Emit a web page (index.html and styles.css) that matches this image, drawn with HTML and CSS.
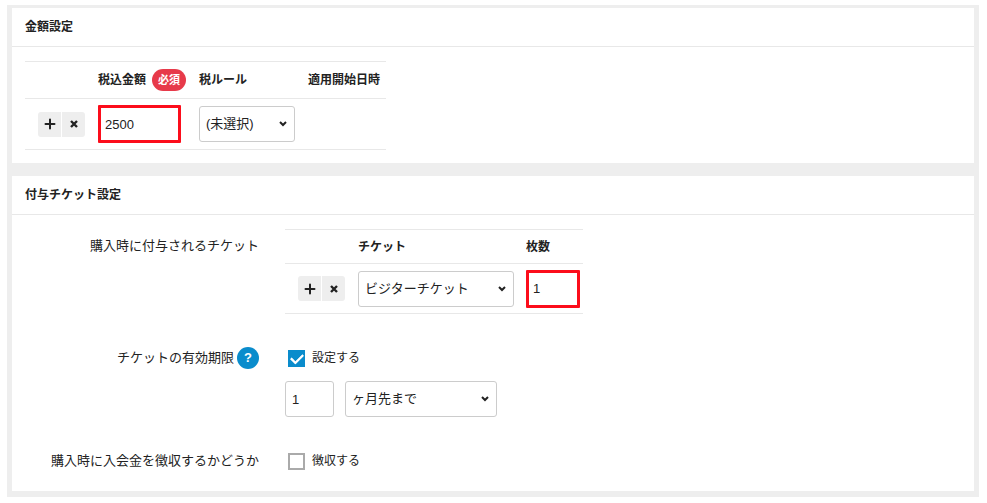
FILE: index.html
```html
<!DOCTYPE html>
<html lang="ja">
<head>
<meta charset="utf-8">
<meta name="viewport" content="width=device-width, initial-scale=1">
<title>金額設定</title>
<link rel="stylesheet" href="styles.css">
</head>
<body>
<svg class="sprite" aria-hidden="true">
  <symbol id="plus" viewBox="0 0 12 12"><path d="M6 1.5v9M1.5 6h9" stroke="currentColor" stroke-width="2" stroke-linecap="round" fill="none"/></symbol>
  <symbol id="cross" viewBox="0 0 12 12"><path d="M3 3l6 6M9 3l-6 6" stroke="currentColor" stroke-width="2.4" fill="none"/></symbol>
</svg>
<form class="page">
  <section class="panel">
    <h2 class="panel-title">金額設定</h2>
    <div class="panel-body">
      <table class="grid price-grid">
        <colgroup><col class="c-actions"><col class="c-price"><col class="c-rule"><col class="c-date"></colgroup>
        <thead>
          <tr><th></th><th scope="col"><span class="required-head"><label for="price">税込金額</label><span class="badge">必須</span></span></th><th scope="col"><label for="rule">税ルール</label></th><th scope="col">適用開始日時</th></tr>
        </thead>
        <tbody>
          <tr>
            <td><div class="actions"><button type="button" aria-label="追加"><svg><use href="#plus"/></svg></button><button type="button" aria-label="削除"><svg><use href="#cross"/></svg></button></div></td>
            <td><input class="field price marked" id="price" type="text" value="2500"></td>
            <td><span class="select rule"><select class="field" id="rule"><option>(未選択)</option></select><svg class="chevron" viewBox="0 0 8 6"><path d="M1 1l3 3 3-3"/></svg></span></td>
            <td></td>
          </tr>
        </tbody>
      </table>
    </div>
  </section>

  <section class="panel">
    <h2 class="panel-title">付与チケット設定</h2>
    <div class="panel-body rows">
      <div class="row">
        <div class="row-label tall">購入時に付与されるチケット</div>
        <table class="grid ticket-grid">
          <colgroup><col class="c-actions"><col class="c-ticket"><col class="c-count"></colgroup>
          <thead>
            <tr><th></th><th scope="col"><label for="ticket">チケット</label></th><th scope="col"><label for="count">枚数</label></th></tr>
          </thead>
          <tbody>
            <tr>
              <td><div class="actions"><button type="button" aria-label="追加"><svg><use href="#plus"/></svg></button><button type="button" aria-label="削除"><svg><use href="#cross"/></svg></button></div></td>
              <td><span class="select"><select class="field" id="ticket"><option>ビジターチケット</option></select><svg class="chevron" viewBox="0 0 8 6"><path d="M1 1l3 3 3-3"/></svg></span></td>
              <td><input class="field count marked" id="count" type="text" value="1"></td>
            </tr>
          </tbody>
        </table>
      </div>

      <div class="row">
        <div class="row-label"><span>チケットの有効期限</span><button class="help" type="button" aria-label="ヘルプ">?</button></div>
        <div>
          <label class="check"><input type="checkbox" checked><span>設定する</span></label>
          <div class="period">
            <input class="field months" type="text" value="1" aria-label="期間">
            <span class="select unit"><select class="field" aria-label="単位"><option>ヶ月先まで</option></select><svg class="chevron" viewBox="0 0 8 6"><path d="M1 1l3 3 3-3"/></svg></span>
          </div>
        </div>
      </div>

      <div class="row">
        <div class="row-label">購入時に入会金を徴収するかどうか</div>
        <label class="check"><input type="checkbox"><span>徴収する</span></label>
      </div>
    </div>
  </section>
</form>
</body>
</html>
```
FILE: styles.css
```css
* {
  box-sizing: border-box;
}

body {
  margin: 5px 8px 5px 7px;
  background: #fff;
  color: #222;
  font: 13px/20px "Liberation Sans", "Noto Sans CJK JP", sans-serif;
}

.sprite {
  display: none;
}

.page {
  display: flex;
  flex-direction: column;
  gap: 13px;
  padding: 3px 5px 6px;
  background: #eee;
}

.panel {
  background: #fff;
}

.panel-title {
  margin: 0;
  padding: 9px 13px;
  border-bottom: 1px solid #e8e8e8;
  font-size: 12px;
  line-height: 20px;
}

.panel-body {
  padding: 14px 13px 13px;
}

.grid {
  table-layout: fixed;
  border-collapse: collapse;
}

.price-grid { width: 361px; }
.ticket-grid { width: 298px; }
.c-actions { width: 67px; }
.c-price { width: 101px; }
.c-rule { width: 109px; }
.c-date { width: 84px; }
.c-ticket { width: 168px; }
.c-count { width: 63px; }

.grid tr {
  border-top: 1px solid #e8e8e8;
  border-bottom: 1px solid #e8e8e8;
}

.grid th {
  height: 34px;
  padding: 0 0 0 6px;
  font-size: 12px;
  text-align: left;
  white-space: nowrap;
}

.price-grid th {
  height: 37px;
}

.grid td {
  height: 51px;
  padding: 0 6px;
}

.ticket-grid td {
  height: 50px;
}

.grid td:first-child {
  padding-left: 13px;
}

.required-head {
  display: flex;
  align-items: center;
  gap: 6px;
}

.badge {
  padding: 0 6px;
  border-radius: 11px;
  background: #e73a4a;
  color: #fff;
  font-size: 11px;
  line-height: 22px;
}

.actions {
  display: flex;
  gap: 1px;
}

.actions button {
  display: grid;
  place-items: center;
  width: 23px;
  height: 25px;
  padding: 0;
  border: 0;
  border-radius: 3px 0 0 3px;
  background: #eee;
  color: #222;
}

.actions button + button {
  border-radius: 0 3px 3px 0;
}

.actions svg {
  width: 12px;
  height: 12px;
}

.field {
  display: block;
  width: 100%;
  height: 36px;
  margin: 0;
  padding: 0 6px;
  border: 1px solid #ccc;
  border-radius: 3px;
  background: #fff;
  color: #222;
  font: inherit;
  appearance: none;
}

.marked {
  height: 38px;
  padding: 0 4px;
  border: 3px solid #fc0d1b;
  border-radius: 1px;
}

.price { width: 83px; }
.count { width: 54px; }
.months { width: 49px; }
.rule { width: 96px; }
.unit { width: 152px; }

.select {
  position: relative;
  display: block;
}

.chevron {
  position: absolute;
  top: 15px;
  right: 8px;
  width: 8px;
  height: 6px;
  fill: none;
  stroke: #222;
  stroke-width: 2;
  pointer-events: none;
}

.rows {
  display: flex;
  flex-direction: column;
  gap: 33px;
  padding-bottom: 19px;
}

.row {
  display: grid;
  grid-template-columns: 234px 1fr;
  column-gap: 26px;
  align-items: start;
}

.row-label {
  display: flex;
  justify-content: flex-end;
  align-items: center;
  gap: 3px;
  height: 22px;
}

.tall {
  height: 34px;
}

.help {
  width: 22px;
  height: 22px;
  padding: 0;
  border: 0;
  border-radius: 50%;
  background: #0a8ccc;
  color: #fff;
  font: bold 13px/22px "Liberation Sans", sans-serif;
}

.check {
  display: flex;
  align-items: center;
  gap: 7px;
  height: 22px;
  padding-left: 3px;
  font-size: 12px;
}

.check input {
  width: 17px;
  height: 17px;
  margin: 0;
  border: 2px solid #aaa;
  background: #fff;
  appearance: none;
}

.check input:checked {
  display: grid;
  place-items: center;
  border: 0;
  background: #0a8ccc;
}

.check input:checked::before {
  content: "";
  width: 11px;
  height: 6px;
  border: solid #fff;
  border-width: 0 0 3px 3px;
  border-radius: 1px;
  transform: translateY(-1px) rotate(-45deg) scale(0.9);
}

.period {
  display: flex;
  gap: 11px;
  margin-top: 12px;
}
```
